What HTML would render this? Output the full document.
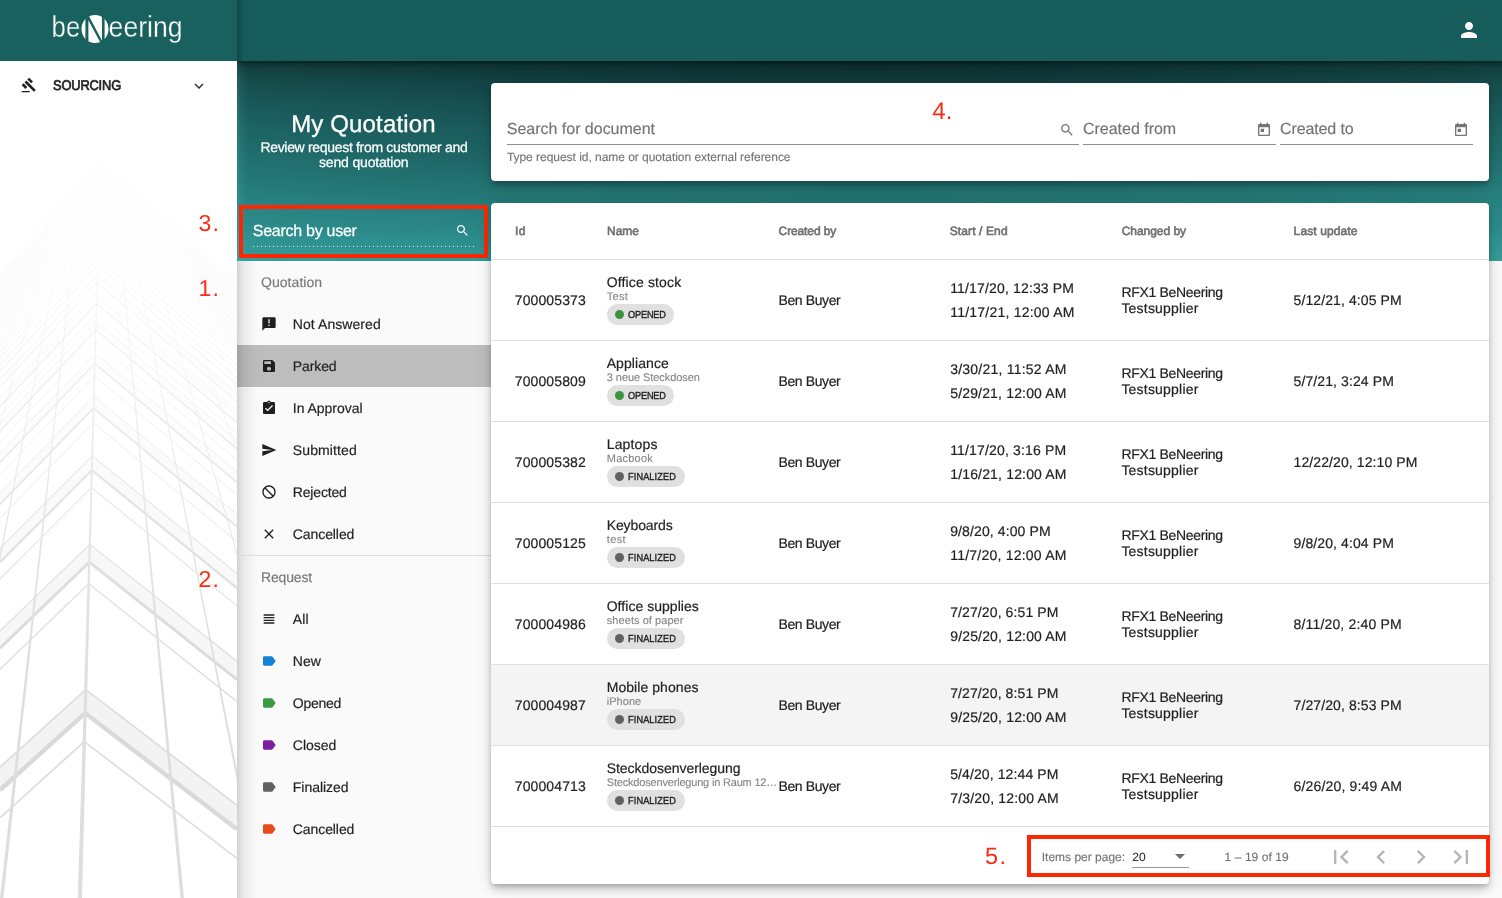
<!DOCTYPE html>
<html>
<head>
<meta charset="utf-8">
<title>My Quotation</title>
<style>
*{box-sizing:border-box;margin:0;padding:0}
html,body{width:1502px;height:898px;overflow:hidden;background:#fafafa;font-family:"Liberation Sans",sans-serif;color:#212121}
.abs{position:absolute}
#wrap{position:absolute;left:0;top:0;width:1502px;height:898px;will-change:transform}
.t{position:absolute;white-space:nowrap;line-height:1;text-rendering:geometricPrecision}
#main{left:237px;top:0;width:1265px;height:898px;background:#fafafa}
#grad{left:237px;top:61px;width:1265px;height:200px;background:linear-gradient(180deg,rgba(0,0,0,.42) 0,rgba(0,0,0,.3) 6px,rgba(0,0,0,.16) 20px,rgba(0,0,0,.05) 45px,rgba(0,0,0,0) 70px),linear-gradient(90deg,rgba(70,180,178,.28) 0,rgba(70,180,178,.1) 5px,rgba(70,180,178,0) 11px),radial-gradient(ellipse 130% 120% at 50% -8%,#114041 5%,#154b4c 23%,#1c6060 48%,#237574 65%,#2c8d8c 85%,#37a09e 100%)}
#topbar{left:237px;top:0;width:1265px;height:61px;background:#165c5a;box-shadow:0 2px 5px rgba(0,0,0,.35);clip-path:inset(0 0 -12px 0)}
#logoarea{left:0;top:0;width:237px;height:61px;background:#19615f}
#logosh{left:237px;top:0;width:7px;height:61px;background:linear-gradient(90deg,rgba(0,0,0,.22),rgba(0,0,0,0))}
#sidebar{left:0;top:61px;width:237px;height:837px;background:#fff}
#panel{left:237px;top:261px;width:24px;height:637px;background:linear-gradient(90deg,rgba(0,0,0,.16) 0,rgba(0,0,0,.08) 5px,rgba(0,0,0,.035) 12px,rgba(0,0,0,0) 22px)}
.card{position:absolute;background:#fff;border-radius:4px;box-shadow:0 3px 5px -1px rgba(0,0,0,.2),0 6px 10px 0 rgba(0,0,0,.14),0 1px 18px 0 rgba(0,0,0,.12)}
.red{color:#fb2a12}
.sx{transform:scaleX(.92);transform-origin:0 0}
.rbox{position:absolute;border:4px solid #fd2703}
.li{font-size:14px;color:#1f1f1f;-webkit-text-stroke:.18px #1f1f1f}
.sub{font-size:14px;color:#777;-webkit-text-stroke:.15px #777}
.hline{position:absolute;height:1px;background:#e0e0e0}
.th{font-size:12px;color:#707070;-webkit-text-stroke:.6px #707070}
.c{font-size:14px;color:#212121;-webkit-text-stroke:.18px #212121}
.ds{font-size:11px;color:#858585;-webkit-text-stroke:.12px #858585}
.ph{font-size:16px;color:#747474;-webkit-text-stroke:.15px #747474}
.hint{font-size:12px;color:#737373;-webkit-text-stroke:.12px #737373}
.pg{font-size:12px;color:#737373;-webkit-text-stroke:.12px #737373}
.cp{font-size:10.2px;color:#212121;-webkit-text-stroke:.36px #212121;transform:scaleX(.9);transform-origin:0 0}
.chip{position:absolute;height:21px;border-radius:10.5px;background:#e0e0e0}
.chip i{position:absolute;left:8px;top:6px;width:9px;height:9px;border-radius:50%;background:#616161}
.chip.op{width:67px}.chip.op i{background:#3a933f}
.chip.fi{width:78px}
</style>
</head>
<body>
<div id="main" class="abs"></div><div id="grad" class="abs"></div>
<div id="wrap">
<div id="sidebar" class="abs"></div><svg class="abs" style="left:0;top:61px" width="237" height="837" viewBox="0 61 237 837"><defs><linearGradient id="fade" x1="0" y1="0" x2="0" y2="1"><stop offset="0" stop-color="#fff" stop-opacity="1"/><stop offset="0.12" stop-color="#fff" stop-opacity="1"/><stop offset="0.5" stop-color="#fff" stop-opacity=".55"/><stop offset="0.85" stop-color="#fff" stop-opacity="0.12"/><stop offset="1" stop-color="#fff" stop-opacity="0"/></linearGradient></defs><g style="filter:blur(.6px)"><path d="M0 767.1 L85.8 689.6 L237 805.3 L237 829.3 L85.1 713.1 L0 790.0 Z" fill="#f3f3f3" fill-opacity="1.00"/><path d="M0 790.0 L85.1 713.1 L237 829.3" fill="none" stroke="#d9d9d9" stroke-width="4.40" stroke-opacity="1.00"/><path d="M0 767.1 L85.8 689.6 L237 805.3" fill="none" stroke="#dedede" stroke-width="1.80" stroke-opacity="1.00"/><path d="M0 817.8 L84.3 741.6 L237 858.4" fill="none" stroke="#dedede" stroke-width="1.80" stroke-opacity="1.00"/><path d="M0 630.9 L89.8 544.3 L237 661.4 L237 679.6 L89.3 562.1 L0 648.2 Z" fill="#f3f3f3" fill-opacity="0.76"/><path d="M0 648.2 L89.3 562.1 L237 679.6" fill="none" stroke="#d9d9d9" stroke-width="3.07" stroke-opacity="1.00"/><path d="M0 630.9 L89.8 544.3 L237 661.4" fill="none" stroke="#dedede" stroke-width="1.36" stroke-opacity="1.00"/><path d="M0 669.3 L88.7 583.7 L237 701.6" fill="none" stroke="#dedede" stroke-width="1.36" stroke-opacity="1.00"/><path d="M0 548.2 L92.3 455.8 L237 573.5 L237 588.2 L91.9 470.1 L0 562.1 Z" fill="#f3f3f3" fill-opacity="0.61"/><path d="M0 562.1 L91.9 470.1 L237 588.2" fill="none" stroke="#d9d9d9" stroke-width="2.31" stroke-opacity="1.00"/><path d="M0 548.2 L92.3 455.8 L237 573.5" fill="none" stroke="#dedede" stroke-width="1.10" stroke-opacity="1.00"/><path d="M0 579.0 L91.4 487.5 L237 605.9" fill="none" stroke="#dedede" stroke-width="1.10" stroke-opacity="1.00"/><path d="M0 492.6 L93.9 396.2 L237 514.3 L237 526.6 L93.6 408.2 L0 504.2 Z" fill="#f3f3f3" fill-opacity="0.51"/><path d="M0 504.2 L93.6 408.2 L237 526.6" fill="none" stroke="#d9d9d9" stroke-width="1.83" stroke-opacity="1.00"/><path d="M0 492.6 L93.9 396.2 L237 514.3" fill="none" stroke="#dedede" stroke-width="0.92" stroke-opacity="1.00"/><path d="M0 518.3 L93.2 422.7 L237 541.5" fill="none" stroke="#dedede" stroke-width="0.92" stroke-opacity="1.00"/><path d="M0 452.6 L95.1 353.3 L237 471.7 L237 482.3 L94.9 363.6 L0 462.6 Z" fill="#f3f3f3" fill-opacity="0.44"/><path d="M0 462.6 L94.9 363.6 L237 482.3" fill="none" stroke="#d9d9d9" stroke-width="1.51" stroke-opacity="1.00"/><path d="M0 452.6 L95.1 353.3 L237 471.7" fill="none" stroke="#dedede" stroke-width="0.79" stroke-opacity="1.00"/><path d="M0 474.7 L94.5 376.1 L237 495.1" fill="none" stroke="#dedede" stroke-width="0.79" stroke-opacity="1.00"/><path d="M0 422.5 L96.0 321.0 L237 439.6 L237 448.9 L95.8 330.0 L0 431.3 Z" fill="#f3f3f3" fill-opacity="0.38"/><path d="M0 431.3 L95.8 330.0 L237 448.9" fill="none" stroke="#d9d9d9" stroke-width="1.27" stroke-opacity="1.00"/><path d="M0 422.5 L96.0 321.0 L237 439.6" fill="none" stroke="#dedede" stroke-width="0.69" stroke-opacity="1.00"/><path d="M0 441.9 L95.5 341.0 L237 460.1" fill="none" stroke="#dedede" stroke-width="0.69" stroke-opacity="1.00"/><path d="M0 399.1 L96.7 295.8 L237 414.6 L237 422.8 L96.5 303.8 L0 406.9 Z" fill="#f3f3f3" fill-opacity="0.34"/><path d="M0 406.9 L96.5 303.8 L237 422.8" fill="none" stroke="#d9d9d9" stroke-width="1.09" stroke-opacity="1.00"/><path d="M0 399.1 L96.7 295.8 L237 414.6" fill="none" stroke="#dedede" stroke-width="0.62" stroke-opacity="1.00"/><path d="M0 416.3 L96.3 313.6 L237 432.8" fill="none" stroke="#dedede" stroke-width="0.62" stroke-opacity="1.00"/><path d="M0 380.3 L97.3 275.6 L237 394.4 L237 401.9 L97.1 282.8 L0 387.3 Z" fill="#f3f3f3" fill-opacity="0.31"/><path d="M0 387.3 L97.1 282.8 L237 401.9" fill="none" stroke="#d9d9d9" stroke-width="0.95" stroke-opacity="1.00"/><path d="M0 380.3 L97.3 275.6 L237 394.4" fill="none" stroke="#dedede" stroke-width="0.56" stroke-opacity="1.00"/><path d="M0 395.8 L96.9 291.6 L237 410.8" fill="none" stroke="#dedede" stroke-width="0.56" stroke-opacity="1.00"/><path d="M0 371.2 L97.6 265.6 L237 384.7" fill="none" stroke="#d9d9d9" stroke-width="0.84" stroke-opacity="1.00"/><path d="M0 364.8 L97.8 259.0 L237 377.9" fill="none" stroke="#dedede" stroke-width="0.51" stroke-opacity="1.00"/><path d="M0 379.0 L97.4 273.5 L237 392.9" fill="none" stroke="#dedede" stroke-width="0.51" stroke-opacity="1.00"/><path d="M0 357.8 L98.0 251.1 L237 370.3" fill="none" stroke="#d9d9d9" stroke-width="0.75" stroke-opacity="1.00"/><path d="M0 352.0 L98.2 245.1 L237 364.1" fill="none" stroke="#dedede" stroke-width="0.46" stroke-opacity="1.00"/><path d="M0 365.0 L97.8 258.5 L237 377.8" fill="none" stroke="#dedede" stroke-width="0.46" stroke-opacity="1.00"/><path d="M0 346.5 L98.3 238.9 L237 358.2" fill="none" stroke="#d9d9d9" stroke-width="0.68" stroke-opacity="1.00"/><path d="M0 341.1 L98.5 233.4 L237 352.4" fill="none" stroke="#dedede" stroke-width="0.43" stroke-opacity="1.00"/><path d="M0 353.1 L98.1 245.7 L237 365.1" fill="none" stroke="#dedede" stroke-width="0.43" stroke-opacity="1.00"/><path d="M0 336.7 L98.6 228.5 L237 347.7" fill="none" stroke="#d9d9d9" stroke-width="0.62" stroke-opacity="1.00"/><path d="M0 331.7 L98.8 223.3 L237 342.4" fill="none" stroke="#dedede" stroke-width="0.40" stroke-opacity="1.00"/><path d="M0 342.8 L98.5 234.8 L237 354.2" fill="none" stroke="#dedede" stroke-width="0.40" stroke-opacity="1.00"/><path d="M0 328.3 L98.9 219.4 L237 338.7" fill="none" stroke="#d9d9d9" stroke-width="0.60" stroke-opacity="1.00"/><path d="M0 323.6 L99.0 214.5 L237 333.7" fill="none" stroke="#dedede" stroke-width="0.40" stroke-opacity="1.00"/><path d="M0 334.0 L98.7 225.3 L237 344.7" fill="none" stroke="#dedede" stroke-width="0.40" stroke-opacity="1.00"/><path d="M0 320.9 L99.1 211.4 L237 330.7" fill="none" stroke="#d9d9d9" stroke-width="0.60" stroke-opacity="1.00"/><path d="M0 316.5 L99.2 206.9 L237 326.1" fill="none" stroke="#dedede" stroke-width="0.40" stroke-opacity="1.00"/><path d="M0 326.2 L98.9 216.9 L237 336.4" fill="none" stroke="#dedede" stroke-width="0.40" stroke-opacity="1.00"/><path d="M0 314.3 L99.3 204.4 L237 323.7" fill="none" stroke="#d9d9d9" stroke-width="0.60" stroke-opacity="1.00"/><path d="M0 310.2 L99.4 200.1 L237 319.3" fill="none" stroke="#dedede" stroke-width="0.40" stroke-opacity="1.00"/><path d="M0 319.4 L99.2 209.6 L237 329.0" fill="none" stroke="#dedede" stroke-width="0.40" stroke-opacity="1.00"/><path d="M0 308.5 L99.5 198.1 L237 317.5" fill="none" stroke="#d9d9d9" stroke-width="0.60" stroke-opacity="1.00"/><path d="M0 304.6 L99.6 194.1 L237 313.3" fill="none" stroke="#dedede" stroke-width="0.40" stroke-opacity="1.00"/><path d="M0 313.3 L99.3 203.0 L237 322.5" fill="none" stroke="#dedede" stroke-width="0.40" stroke-opacity="1.00"/><path d="M0 303.3 L99.6 192.5 L237 311.9" fill="none" stroke="#d9d9d9" stroke-width="0.60" stroke-opacity="1.00"/><path d="M0 299.6 L99.7 188.7 L237 308.0" fill="none" stroke="#dedede" stroke-width="0.40" stroke-opacity="1.00"/><path d="M0 307.8 L99.5 197.2 L237 316.7" fill="none" stroke="#dedede" stroke-width="0.40" stroke-opacity="1.00"/><path d="M0 298.6 L99.8 187.5 L237 306.9" fill="none" stroke="#d9d9d9" stroke-width="0.60" stroke-opacity="1.00"/><path d="M0 295.1 L99.9 183.8 L237 303.1" fill="none" stroke="#dedede" stroke-width="0.40" stroke-opacity="1.00"/><path d="M0 302.9 L99.6 191.9 L237 311.4" fill="none" stroke="#dedede" stroke-width="0.40" stroke-opacity="1.00"/><path d="M0 294.4 L99.9 182.9 L237 302.3" fill="none" stroke="#d9d9d9" stroke-width="0.60" stroke-opacity="1.00"/><path d="M0 291.0 L100.0 179.4 L237 298.8" fill="none" stroke="#dedede" stroke-width="0.40" stroke-opacity="1.00"/><path d="M0 298.5 L99.8 187.1 L237 306.6" fill="none" stroke="#dedede" stroke-width="0.40" stroke-opacity="1.00"/><path d="M0 290.5 L100.0 178.7 L237 298.2" fill="none" stroke="#d9d9d9" stroke-width="0.60" stroke-opacity="1.00"/><path d="M0 287.3 L100.1 175.4 L237 294.8" fill="none" stroke="#dedede" stroke-width="0.40" stroke-opacity="1.00"/><path d="M0 294.4 L99.9 182.8 L237 302.3" fill="none" stroke="#dedede" stroke-width="0.40" stroke-opacity="1.00"/><path d="M0 287.0 L100.1 175.0 L237 294.4" fill="none" stroke="#d9d9d9" stroke-width="0.60" stroke-opacity="1.00"/><path d="M0 283.9 L100.2 171.8 L237 291.1" fill="none" stroke="#dedede" stroke-width="0.40" stroke-opacity="1.00"/><path d="M0 290.7 L100.0 178.8 L237 298.3" fill="none" stroke="#dedede" stroke-width="0.40" stroke-opacity="1.00"/><path d="M0 283.8 L100.2 171.5 L237 290.9" fill="none" stroke="#d9d9d9" stroke-width="0.60" stroke-opacity="1.00"/><path d="M0 280.8 L100.3 168.4 L237 287.8" fill="none" stroke="#dedede" stroke-width="0.40" stroke-opacity="1.00"/><path d="M0 287.3 L100.1 175.2 L237 294.7" fill="none" stroke="#dedede" stroke-width="0.40" stroke-opacity="1.00"/><path d="M0 280.8 L100.3 168.3 L237 287.7" fill="none" stroke="#d9d9d9" stroke-width="0.60" stroke-opacity="1.00"/><path d="M0 278.0 L100.4 165.3 L237 284.7" fill="none" stroke="#dedede" stroke-width="0.40" stroke-opacity="1.00"/><path d="M0 284.2 L100.2 171.8 L237 291.4" fill="none" stroke="#dedede" stroke-width="0.40" stroke-opacity="1.00"/><path d="M0 278.1 L100.4 165.3 L237 284.8" fill="none" stroke="#d9d9d9" stroke-width="0.60" stroke-opacity="1.00"/><path d="M0 275.5 L100.5 162.6 L237 282.1" fill="none" stroke="#d9d9d9" stroke-width="0.60" stroke-opacity="1.00"/><path d="M0 273.1 L100.5 160.0 L237 279.5" fill="none" stroke="#d9d9d9" stroke-width="0.60" stroke-opacity="1.00"/><path d="M101.4 130.0 L77.8 898 L82.0 898 Z" fill="#dedede"/><path d="M109.2 130.0 L180.5 898 L183.9 898 Z" fill="#dedede"/><path d="M109.8 130.0 L259.8 898 L262.4 898 Z" fill="#dedede"/><path d="M116.1 130.0 L334.0 898 L336.0 898 Z" fill="#dedede"/><path d="M121.6 130.0 L397.3 898 L398.8 898 Z" fill="#dedede"/><path d="M125.5 130.0 L451.3 898 L452.5 898 Z" fill="#dedede"/><path d="M128.8 130.0 L496.9 898 L497.9 898 Z" fill="#dedede"/><path d="M86.9 130.0 L-0.0 898 L3.4 898 Z" fill="#dedede"/><path d="M83.3 130.0 L-67.8 898 L-65.2 898 Z" fill="#dedede"/><path d="M79.8 130.0 L-128.6 898 L-126.6 898 Z" fill="#dedede"/><path d="M76.9 130.0 L-181.1 898 L-179.6 898 Z" fill="#dedede"/><path d="M74.6 130.0 L-225.5 898 L-224.3 898 Z" fill="#dedede"/></g><rect x="0" y="61" width="237" height="640" fill="url(#fade)"/></svg>
<div id="topbar" class="abs"></div><div id="logoarea" class="abs"></div><div id="logosh" class="abs"></div>
<svg class="abs" style="left:40px;top:8px" width="160" height="44" viewBox="40 8 160 44">
<ellipse cx="95" cy="29" rx="13.5" ry="14.1" fill="#fff"/>
<path d="M85.4 15 H88.4 L103.2 43 H102 V15 H104.6 V43 H100.6 L88.4 20.2 V43 H85.4 Z" fill="#19615f"/>
<g font-family="Liberation Sans, sans-serif" font-size="29.5" fill="#fff" stroke="#19615f" stroke-width=".3">
<text x="51.6" y="36.8" textLength="28.6" lengthAdjust="spacingAndGlyphs">be</text>
<text x="108.6" y="36.8" textLength="74" lengthAdjust="spacingAndGlyphs">eering</text>
</g>
</svg>
<svg class="abs" style="left:1457px;top:18px" width="24" height="24" viewBox="0 0 24 24"><path fill="#fff" d="M12 12c2.210 0 4-1.790 4-4s-1.790-4-4-4-4 1.790-4 4 1.790 4 4 4zm0 2c-2.670 0-8 1.340-8 4v2h16v-2c0-2.660-5.330-4-8-4z"/></svg>
<svg class="abs" style="left:21px;top:77px" width="16" height="16" viewBox="0 0 24 24"><path fill="#1f1f1f" d="M1 21h12v2H1zM5.245 8.070l2.830-2.827 14.140 14.142-2.828 2.828zM12.317 1l5.657 5.656-2.830 2.830-5.654-5.660zM3.825 9.485l5.657 5.657-2.828 2.828-5.657-5.657z"/></svg>
<div class="t b sx" style="letter-spacing:-0.194px;left:53px;top:78px;font-size:14px;color:#1f1f1f;-webkit-text-stroke:.7px #1f1f1f">SOURCING</div>
<svg class="abs" style="left:190px;top:77px" width="18" height="18" viewBox="0 0 24 24"><path fill="#333" d="M7.410 8.590L12 13.170l4.590-4.580L18 10l-6 6-6-6 1.410-1.410z"/></svg>
<div class="t w" style="letter-spacing:0.147px;left:291.2px;top:112.6px;font-size:24px;color:#fff;-webkit-text-stroke:.3px #fff">My Quotation</div>
<div class="t w" style="letter-spacing:-0.315px;left:260.4px;top:140px;font-size:14px;color:#fff;-webkit-text-stroke:.25px #fff">Review request from customer and</div>
<div class="t w" style="letter-spacing:-0.169px;left:319px;top:155px;font-size:14px;color:#fff;-webkit-text-stroke:.25px #fff">send quotation</div>
<div class="rbox" style="left:239px;top:205px;width:249.4px;height:53px"></div>
<div class="t w" style="letter-spacing:-0.272px;left:252.8px;top:223.7px;font-size:16px;color:#fff;-webkit-text-stroke:.25px #fff">Search by user</div>
<svg class="abs" style="left:455px;top:223px" width="15" height="15" viewBox="0 0 24 24"><path fill="#fff" d="M15.500 14h-.790l-.280-.270C15.410 12.590 16 11.110 16 9.500 16 5.910 13.090 3 9.500 3S3 5.910 3 9.500 5.910 16 9.500 16c1.610 0 3.090-.590 4.230-1.570l.270.280v.790l5 4.990L20.490 19l-4.990-5zm-6 0C7.010 14 5 11.990 5 9.500S7.010 5 9.500 5 14 7.010 14 9.500 11.990 14 9.500 14z"/></svg>
<div class="abs" style="left:253px;top:246px;width:221px;height:1px;background:repeating-linear-gradient(90deg,rgba(255,255,255,.85) 0 1px,transparent 1px 4px)"></div>
<div class="t sub" style="letter-spacing:0.053px;left:261px;top:275px;">Quotation</div>
<div class="abs" style="left:237px;top:345px;width:254px;height:42px;background:#bdbdbd"></div>
<div id="panel" class="abs"></div>
<svg class="abs" style="left:261px;top:316px" width="16" height="16" viewBox="0 0 24 24"><path fill="#1f1f1f" d="M20 2H4c-1.1 0-1.99.9-1.99 2L2 22l4-4h14c1.1 0 2-.9 2-2V4c0-1.1-.9-2-2-2zm-7 9h-2V5h2v6zm0 4h-2v-2h2v2z"/></svg>
<div class="t li" style="letter-spacing:0.069px;left:292.8px;top:317px;">Not Answered</div>
<svg class="abs" style="left:261px;top:358px" width="16" height="16" viewBox="0 0 24 24"><path fill="#1f1f1f" d="M17 3H5c-1.11 0-2 .9-2 2v14c0 1.1.89 2 2 2h14c1.1 0 2-.9 2-2V7l-4-4zm-5 16c-1.66 0-3-1.34-3-3s1.34-3 3-3 3 1.34 3 3-1.34 3-3 3zm3-10H5V5h10v4z"/></svg>
<div class="t li" style="letter-spacing:-0.110px;left:292.8px;top:359px;">Parked</div>
<svg class="abs" style="left:261px;top:400px" width="16" height="16" viewBox="0 0 24 24"><path fill="#1f1f1f" d="M19 3h-4.180C14.400 1.840 13.300 1 12 1c-1.300 0-2.400.840-2.820 2H5c-1.100 0-2 .900-2 2v14c0 1.100.900 2 2 2h14c1.100 0 2-.900 2-2V5c0-1.100-.900-2-2-2zm-7 0c.550 0 1 .450 1 1s-.450 1-1 1-1-.450-1-1 .450-1 1-1zm-2 14l-4-4 1.410-1.410L10 14.170l6.590-6.590L18 9l-8 8z"/></svg>
<div class="t li" style="letter-spacing:-0.024px;left:292.8px;top:401px;">In Approval</div>
<svg class="abs" style="left:261px;top:442px" width="16" height="16" viewBox="0 0 24 24"><path fill="#1f1f1f" d="M2.010 21L23 12 2.010 3 2 10l15 2-15 2z"/></svg>
<div class="t li" style="letter-spacing:0.106px;left:292.8px;top:443px;">Submitted</div>
<svg class="abs" style="left:261px;top:484px" width="16" height="16" viewBox="0 0 24 24"><path fill="#1f1f1f" transform="matrix(-1 0 0 1 24 0)" d="M12 2C6.480 2 2 6.480 2 12s4.480 10 10 10 10-4.480 10-10S17.520 2 12 2zM4 12c0-4.420 3.580-8 8-8 1.850 0 3.550.630 4.900 1.690L5.690 16.900C4.630 15.550 4 13.850 4 12zm8 8c-1.850 0-3.550-.630-4.900-1.690L18.310 7.100C19.370 8.450 20 10.150 20 12c0 4.420-3.580 8-8 8z"/></svg>
<div class="t li" style="letter-spacing:-0.171px;left:292.8px;top:485px;">Rejected</div>
<svg class="abs" style="left:261px;top:526px" width="16" height="16" viewBox="0 0 24 24"><path fill="#1f1f1f" d="M19 6.410L17.590 5 12 10.590 6.410 5 5 6.410 10.590 12 5 17.590 6.410 19 12 13.410 17.590 19 19 17.590 13.410 12z"/></svg>
<div class="t li" style="letter-spacing:-0.085px;left:292.8px;top:527px;">Cancelled</div>
<div class="hline" style="left:237px;top:555px;width:254px;background:#dcdcdc"></div>
<div class="t sub" style="letter-spacing:-0.165px;left:261px;top:570px;">Request</div>
<svg class="abs" style="left:261px;top:611px" width="16" height="16" viewBox="0 0 24 24"><path fill="#1f1f1f" d="M4 15h16v-2H4v2zm0 4h16v-2H4v2zm0-8h16V9H4v2zm0-6v2h16V5H4z"/></svg>
<div class="t li" style="letter-spacing:0.146px;left:292.8px;top:612px;">All</div>
<svg class="abs" style="left:261px;top:653px" width="16" height="16" viewBox="0 0 24 24"><path fill="#1182d6" d="M17.630 5.840C17.270 5.330 16.670 5 16 5L5 5.010C3.900 5.010 3 5.900 3 7v10c0 1.100.900 1.990 2 1.990L16 19c.670 0 1.270-.330 1.630-.840L22 12l-4.370-6.160z"/></svg>
<div class="t li" style="letter-spacing:-0.005px;left:292.8px;top:654px;">New</div>
<svg class="abs" style="left:261px;top:695px" width="16" height="16" viewBox="0 0 24 24"><path fill="#3c9a40" d="M17.630 5.840C17.270 5.330 16.670 5 16 5L5 5.010C3.900 5.010 3 5.900 3 7v10c0 1.100.900 1.990 2 1.990L16 19c.670 0 1.270-.330 1.630-.840L22 12l-4.370-6.160z"/></svg>
<div class="t li" style="letter-spacing:-0.271px;left:292.8px;top:696px;">Opened</div>
<svg class="abs" style="left:261px;top:737px" width="16" height="16" viewBox="0 0 24 24"><path fill="#7b20a3" d="M17.630 5.840C17.270 5.330 16.670 5 16 5L5 5.010C3.900 5.010 3 5.900 3 7v10c0 1.100.900 1.990 2 1.990L16 19c.670 0 1.270-.330 1.630-.840L22 12l-4.370-6.160z"/></svg>
<div class="t li" style="letter-spacing:-0.016px;left:292.8px;top:738px;">Closed</div>
<svg class="abs" style="left:261px;top:779px" width="16" height="16" viewBox="0 0 24 24"><path fill="#616161" d="M17.630 5.840C17.270 5.330 16.670 5 16 5L5 5.010C3.900 5.010 3 5.900 3 7v10c0 1.100.900 1.990 2 1.990L16 19c.670 0 1.270-.330 1.630-.840L22 12l-4.370-6.160z"/></svg>
<div class="t li" style="letter-spacing:-0.026px;left:292.8px;top:780px;">Finalized</div>
<svg class="abs" style="left:261px;top:821px" width="16" height="16" viewBox="0 0 24 24"><path fill="#e64d1c" d="M17.630 5.840C17.270 5.330 16.670 5 16 5L5 5.010C3.900 5.010 3 5.900 3 7v10c0 1.100.900 1.990 2 1.990L16 19c.670 0 1.270-.330 1.630-.840L22 12l-4.370-6.160z"/></svg>
<div class="t li" style="letter-spacing:-0.085px;left:292.8px;top:822px;">Cancelled</div>
<div class="card" style="left:491px;top:83px;width:998px;height:98px"></div>
<div class="t ph" style="letter-spacing:-0.017px;left:506.8px;top:121.7px;">Search for document</div>
<div class="t hint" style="letter-spacing:-0.036px;left:506.9px;top:150.5px;">Type request id, name or quotation external reference</div>
<svg class="abs" style="left:1058.5px;top:121.5px" width="16" height="16" viewBox="0 0 24 24"><path fill="#757575" d="M15.500 14h-.790l-.280-.270C15.410 12.590 16 11.110 16 9.500 16 5.910 13.090 3 9.500 3S3 5.910 3 9.500 5.910 16 9.500 16c1.610 0 3.090-.590 4.230-1.570l.270.280v.790l5 4.990L20.490 19l-4.990-5zm-6 0C7.010 14 5 11.990 5 9.500S7.010 5 9.500 5 14 7.010 14 9.500 11.990 14 9.500 14z"/></svg>
<div class="t ph" style="letter-spacing:-0.015px;left:1083px;top:121.7px;">Created from</div>
<svg class="abs" style="left:1255.8px;top:122.2px" width="16" height="16" viewBox="0 0 24 24"><path fill="#757575" d="M19 3h-1V1h-2v2H8V1H6v2H5c-1.110 0-1.990.900-1.990 2L3 19c0 1.100.890 2 2 2h14c1.100 0 2-.900 2-2V5c0-1.100-.900-2-2-2zm0 16H5V8h14v11zM7 10h5v5H7z"/></svg>
<div class="t ph" style="letter-spacing:-0.112px;left:1280px;top:121.7px;">Created to</div>
<svg class="abs" style="left:1453px;top:122.2px" width="16" height="16" viewBox="0 0 24 24"><path fill="#757575" d="M19 3h-1V1h-2v2H8V1H6v2H5c-1.110 0-1.990.900-1.990 2L3 19c0 1.100.890 2 2 2h14c1.100 0 2-.900 2-2V5c0-1.100-.900-2-2-2zm0 16H5V8h14v11zM7 10h5v5H7z"/></svg>
<div class="hline" style="left:507px;top:144px;width:572px;background:#8e8e8e"></div>
<div class="hline" style="left:1083px;top:144px;width:193px;background:#8e8e8e"></div>
<div class="hline" style="left:1280px;top:144px;width:193px;background:#8e8e8e"></div>
<div class="card" style="left:491px;top:203px;width:998px;height:681px"></div>
<div class="t th" style="letter-spacing:0.342px;left:515.1px;top:225px;">Id</div>
<div class="t th" style="letter-spacing:-0.054px;left:607.1px;top:225px;">Name</div>
<div class="t th" style="letter-spacing:-0.120px;left:778.6px;top:225px;">Created by</div>
<div class="t th" style="letter-spacing:0.118px;left:949.7px;top:225px;">Start / End</div>
<div class="t th" style="letter-spacing:-0.042px;left:1121.7px;top:225px;">Changed by</div>
<div class="t th" style="letter-spacing:0.116px;left:1293.6px;top:225px;">Last update</div>
<div class="hline" style="left:491px;top:259px;width:998px"></div>
<div class="t c" style="letter-spacing:0.102px;left:514.8px;top:293px;">700005373</div>
<div class="t c" style="letter-spacing:0.142px;left:606.7px;top:275px;">Office stock</div>
<div class="t ds" style="letter-spacing:0.303px;left:606.8px;top:291.7px;">Test</div>
<div class="chip op" style="left:607px;top:304px"><i></i></div>
<div class="t cp" style="letter-spacing:-0.172px;left:627.9px;top:310.5px;">OPENED</div>
<div class="t c" style="letter-spacing:-0.397px;left:778.5px;top:293px;">Ben Buyer</div>
<div class="t c" style="letter-spacing:0.157px;left:950.2px;top:281px;">11/17/20, 12:33 PM</div>
<div class="t c" style="letter-spacing:0.223px;left:950.2px;top:305px;">11/17/21, 12:00 AM</div>
<div class="t c" style="letter-spacing:-0.316px;left:1121.4px;top:285px;">RFX1 BeNeering</div>
<div class="t c" style="letter-spacing:0.208px;left:1121.4px;top:301px;">Testsupplier</div>
<div class="t c" style="letter-spacing:0.104px;left:1293.5px;top:293px;">5/12/21, 4:05 PM</div>
<div class="hline" style="left:491px;top:340px;width:998px"></div>
<div class="t c" style="letter-spacing:0.102px;left:514.8px;top:374px;">700005809</div>
<div class="t c" style="letter-spacing:0.078px;left:606.7px;top:356px;">Appliance</div>
<div class="t ds" style="letter-spacing:-0.070px;left:606.8px;top:372.7px;">3 neue Steckdosen</div>
<div class="chip op" style="left:607px;top:385px"><i></i></div>
<div class="t cp" style="letter-spacing:-0.172px;left:627.9px;top:391.5px;">OPENED</div>
<div class="t c" style="letter-spacing:-0.397px;left:778.5px;top:374px;">Ben Buyer</div>
<div class="t c" style="letter-spacing:0.229px;left:950.2px;top:362px;">3/30/21, 11:52 AM</div>
<div class="t c" style="letter-spacing:0.168px;left:950.2px;top:386px;">5/29/21, 12:00 AM</div>
<div class="t c" style="letter-spacing:-0.316px;left:1121.4px;top:366px;">RFX1 BeNeering</div>
<div class="t c" style="letter-spacing:0.208px;left:1121.4px;top:382px;">Testsupplier</div>
<div class="t c" style="letter-spacing:0.104px;left:1293.5px;top:374px;">5/7/21, 3:24 PM</div>
<div class="hline" style="left:491px;top:421px;width:998px"></div>
<div class="t c" style="letter-spacing:0.102px;left:514.8px;top:455px;">700005382</div>
<div class="t c" style="letter-spacing:0.167px;left:606.7px;top:437px;">Laptops</div>
<div class="t ds" style="letter-spacing:0.223px;left:606.8px;top:453.7px;">Macbook</div>
<div class="chip fi" style="left:607px;top:466px"><i></i></div>
<div class="t cp" style="letter-spacing:0.136px;left:627.9px;top:472.5px;">FINALIZED</div>
<div class="t c" style="letter-spacing:-0.397px;left:778.5px;top:455px;">Ben Buyer</div>
<div class="t c" style="letter-spacing:0.160px;left:950.2px;top:443px;">11/17/20, 3:16 PM</div>
<div class="t c" style="letter-spacing:0.168px;left:950.2px;top:467px;">1/16/21, 12:00 AM</div>
<div class="t c" style="letter-spacing:-0.316px;left:1121.4px;top:447px;">RFX1 BeNeering</div>
<div class="t c" style="letter-spacing:0.208px;left:1121.4px;top:463px;">Testsupplier</div>
<div class="t c" style="letter-spacing:0.100px;left:1293.5px;top:455px;">12/22/20, 12:10 PM</div>
<div class="hline" style="left:491px;top:502px;width:998px"></div>
<div class="t c" style="letter-spacing:0.102px;left:514.8px;top:536px;">700005125</div>
<div class="t c" style="letter-spacing:-0.104px;left:606.7px;top:518px;">Keyboards</div>
<div class="t ds" style="letter-spacing:0.366px;left:606.8px;top:534.7px;">test</div>
<div class="chip fi" style="left:607px;top:547px"><i></i></div>
<div class="t cp" style="letter-spacing:0.136px;left:627.9px;top:553.5px;">FINALIZED</div>
<div class="t c" style="letter-spacing:-0.397px;left:778.5px;top:536px;">Ben Buyer</div>
<div class="t c" style="letter-spacing:0.110px;left:950.2px;top:524px;">9/8/20, 4:00 PM</div>
<div class="t c" style="letter-spacing:0.229px;left:950.2px;top:548px;">11/7/20, 12:00 AM</div>
<div class="t c" style="letter-spacing:-0.316px;left:1121.4px;top:528px;">RFX1 BeNeering</div>
<div class="t c" style="letter-spacing:0.208px;left:1121.4px;top:544px;">Testsupplier</div>
<div class="t c" style="letter-spacing:0.104px;left:1293.5px;top:536px;">9/8/20, 4:04 PM</div>
<div class="hline" style="left:491px;top:583px;width:998px"></div>
<div class="t c" style="letter-spacing:0.102px;left:514.8px;top:617px;">700004986</div>
<div class="t c" style="letter-spacing:0.041px;left:606.7px;top:599px;">Office supplies</div>
<div class="t ds" style="letter-spacing:0.057px;left:606.8px;top:615.7px;">sheets of paper</div>
<div class="chip fi" style="left:607px;top:628px"><i></i></div>
<div class="t cp" style="letter-spacing:0.136px;left:627.9px;top:634.5px;">FINALIZED</div>
<div class="t c" style="letter-spacing:-0.397px;left:778.5px;top:617px;">Ben Buyer</div>
<div class="t c" style="letter-spacing:0.104px;left:950.2px;top:605px;">7/27/20, 6:51 PM</div>
<div class="t c" style="letter-spacing:0.168px;left:950.2px;top:629px;">9/25/20, 12:00 AM</div>
<div class="t c" style="letter-spacing:-0.316px;left:1121.4px;top:609px;">RFX1 BeNeering</div>
<div class="t c" style="letter-spacing:0.208px;left:1121.4px;top:625px;">Testsupplier</div>
<div class="t c" style="letter-spacing:0.169px;left:1293.5px;top:617px;">8/11/20, 2:40 PM</div>
<div class="hline" style="left:491px;top:664px;width:998px"></div>
<div class="abs" style="left:491px;top:665px;width:998px;height:80px;background:#f4f4f4"></div>
<div class="t c" style="letter-spacing:0.102px;left:514.8px;top:698px;">700004987</div>
<div class="t c" style="letter-spacing:0.064px;left:606.7px;top:680px;">Mobile phones</div>
<div class="t ds" style="letter-spacing:0.022px;left:606.8px;top:696.7px;">iPhone</div>
<div class="chip fi" style="left:607px;top:709px"><i></i></div>
<div class="t cp" style="letter-spacing:0.136px;left:627.9px;top:715.5px;">FINALIZED</div>
<div class="t c" style="letter-spacing:-0.397px;left:778.5px;top:698px;">Ben Buyer</div>
<div class="t c" style="letter-spacing:0.104px;left:950.2px;top:686px;">7/27/20, 8:51 PM</div>
<div class="t c" style="letter-spacing:0.168px;left:950.2px;top:710px;">9/25/20, 12:00 AM</div>
<div class="t c" style="letter-spacing:-0.316px;left:1121.4px;top:690px;">RFX1 BeNeering</div>
<div class="t c" style="letter-spacing:0.208px;left:1121.4px;top:706px;">Testsupplier</div>
<div class="t c" style="letter-spacing:0.104px;left:1293.5px;top:698px;">7/27/20, 8:53 PM</div>
<div class="hline" style="left:491px;top:745px;width:998px"></div>
<div class="t c" style="letter-spacing:0.102px;left:514.8px;top:779px;">700004713</div>
<div class="t c" style="letter-spacing:-0.040px;left:606.7px;top:761px;">Steckdosenverlegung</div>
<div class="t ds" style="letter-spacing:-0.187px;left:606.8px;top:777.7px;">Steckdosenverlegung in Raum 12…</div>
<div class="chip fi" style="left:607px;top:790px"><i></i></div>
<div class="t cp" style="letter-spacing:0.136px;left:627.9px;top:796.5px;">FINALIZED</div>
<div class="t c" style="letter-spacing:-0.397px;left:778.5px;top:779px;">Ben Buyer</div>
<div class="t c" style="letter-spacing:0.104px;left:950.2px;top:767px;">5/4/20, 12:44 PM</div>
<div class="t c" style="letter-spacing:0.171px;left:950.2px;top:791px;">7/3/20, 12:00 AM</div>
<div class="t c" style="letter-spacing:-0.316px;left:1121.4px;top:771px;">RFX1 BeNeering</div>
<div class="t c" style="letter-spacing:0.208px;left:1121.4px;top:787px;">Testsupplier</div>
<div class="t c" style="letter-spacing:0.171px;left:1293.5px;top:779px;">6/26/20, 9:49 AM</div>
<div class="hline" style="left:491px;top:826px;width:998px"></div>
<div class="rbox" style="left:1027.4px;top:835.4px;width:463px;height:42px"></div>
<div class="t pg" style="letter-spacing:-0.006px;left:1041.8px;top:850.6px;">Items per page:</div>
<div class="t pg" style="letter-spacing:0.170px;left:1132.2px;top:850.6px;color:#212121">20</div>
<div class="abs" style="left:1175px;top:854px;width:0;height:0;border-left:5px solid transparent;border-right:5px solid transparent;border-top:5px solid #6b6b6b"></div>
<div class="hline" style="left:1132px;top:867px;width:57px;background:#9a9a9a"></div>
<div class="t pg" style="letter-spacing:0.067px;left:1224.6px;top:850.6px;">1 – 19 of 19</div>
<svg class="abs" style="left:1327px;top:843px" width="28" height="28" viewBox="0 0 24 24"><path fill="#b5b5b5" d="M18.410 16.590L13.820 12l4.590-4.590L17 6l-6 6 6 6zM6 6h2v12H6z"/></svg>
<svg class="abs" style="left:1367px;top:843px" width="28" height="28" viewBox="0 0 24 24"><path fill="#b5b5b5" d="M15.410 7.410L14 6l-6 6 6 6 1.410-1.410L10.830 12z"/></svg>
<svg class="abs" style="left:1407px;top:843px" width="28" height="28" viewBox="0 0 24 24"><path fill="#b5b5b5" d="M10 6L8.590 7.410 13.170 12l-4.580 4.590L10 18l6-6z"/></svg>
<svg class="abs" style="left:1447px;top:843px" width="28" height="28" viewBox="0 0 24 24"><path fill="#b5b5b5" d="M5.590 7.410L10.180 12l-4.590 4.590L7 18l6-6-6-6zM16 6h2v12h-2z"/></svg>
<div class="t red" style="letter-spacing:0.192px;left:932.3px;top:99.5px;font-size:24px">4.</div>
<div class="t red" style="letter-spacing:1.056px;left:198.6px;top:212px;font-size:23px">3.</div>
<div class="t red" style="letter-spacing:1.056px;left:198.6px;top:277px;font-size:23px">1.</div>
<div class="t red" style="letter-spacing:1.056px;left:198.6px;top:567.5px;font-size:23px">2.</div>
<div class="t red" style="letter-spacing:1.395px;left:985px;top:845px;font-size:23.5px">5.</div>
</div>
</body>
</html>
